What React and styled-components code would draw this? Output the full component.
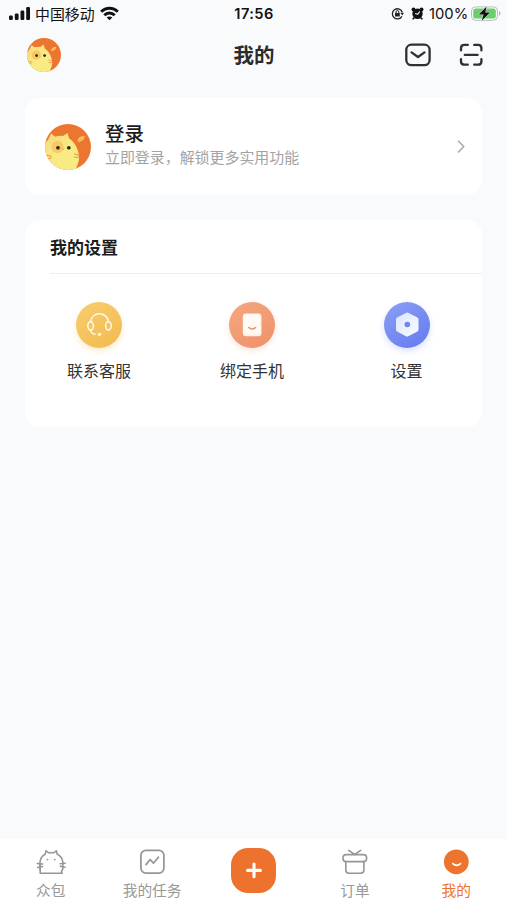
import React from 'react';
import styled, { createGlobalStyle } from 'styled-components';

const GlobalStyle = createGlobalStyle`
  * { box-sizing: border-box; }
  body {
    margin: 0;
    background: #f9fafc;
    font-family: "Noto Sans CJK SC", sans-serif;
    color: #222;
  }
  svg { display: block; flex: none; overflow: visible; }
`;

const Screen = styled.div`
  width: 100%;
  max-width: 507px;
  height: 900px;
  display: flex;
  flex-direction: column;
  overflow: hidden;
  background: #f9fafc;
`;

const StatusBar = styled.header`
  height: 27px;
  flex: none;
  display: grid;
  grid-template-columns: 1fr 44px 1fr;
  align-items: center;
  padding: 0 7px 0 9px;
  color: #111;
`;

const StatusGroup = styled.div`
  display: flex;
  align-items: center;
  justify-content: ${(p) => (p.$end ? 'flex-end' : 'flex-start')};
`;

const Carrier = styled.span`
  margin: 0 5px 0 4px;
  padding-bottom: 1px;
  font-size: 14.9px;
  line-height: 25px;
`;

const Clock = styled.time`
  margin-left: -1px;
  font: 600 14.6px/26px Inter, sans-serif;
  letter-spacing: 0.4px;
  text-align: center;
  white-space: nowrap;
`;

const Percent = styled.span`
  width: 39px;
  margin: 0 3px 0 5px;
  font: 400 14.8px/26px Inter, sans-serif;
  white-space: nowrap;
`;

const TitleBar = styled.div`
  height: 56px;
  flex: none;
  display: grid;
  grid-template-columns: 1fr auto 1fr;
  align-items: center;
  padding: 0 24px 0 27px;
`;

const Title = styled.h1`
  margin: 0;
  padding: 0 2px 2px 0;
  font-size: 20.5px;
  line-height: 30px;
  font-weight: 600;
  color: #2b2b2b;
`;

const TitleActions = styled.div`
  display: flex;
  justify-content: flex-end;
  gap: 28px;
`;

const Content = styled.main`
  flex: 1;
  display: flex;
  flex-direction: column;
  gap: 25px;
  padding: 15px 25px 0;
`;

const Card = styled.section`
  background: #fff;
  border-radius: 15px;
`;

const LoginCard = styled(Card)`
  height: 97px;
  display: flex;
  align-items: center;
  padding: 0 17px 0 20px;
`;

const LoginText = styled.div`
  flex: 1;
  margin-left: 14px;
  padding-bottom: 5px;
`;

const LoginTitle = styled.div`
  font-size: 19.4px;
  line-height: 25px;
  font-weight: 500;
  color: #1c1c1c;
`;

const LoginHint = styled.div`
  font-size: 14.95px;
  line-height: 23px;
  color: #a3a3a3;
`;

const SettingsCard = styled(Card)`
  height: 207px;
`;

const SettingsHeading = styled.h2`
  height: 54px;
  margin: 0 0 0 25px;
  border-bottom: 1px solid #eeeff0;
  font-size: 17px;
  line-height: 53px;
  font-weight: 700;
  color: #1c1c1c;
`;

const SettingsGrid = styled.div`
  display: grid;
  grid-template-columns: 148px 1fr 151px;
  padding-top: 28px;
`;

const SettingItem = styled.div`
  display: flex;
  flex-direction: column;
  align-items: center;
  gap: 9px;
  font-size: 16px;
  line-height: 26px;
  color: #333;
`;

const Disc = styled.div`
  width: 46px;
  height: 46px;
  display: grid;
  place-items: center;
  border-radius: 50%;
  background: ${(p) => p.$fill};
  box-shadow: 0 3px 6px ${(p) => p.$glow};
`;

const TabBar = styled.nav`
  height: 61px;
  flex: none;
  display: grid;
  grid-template-columns: repeat(5, 1fr);
  background: #fff;
`;

const Tab = styled.div`
  display: flex;
  flex-direction: column;
  align-items: center;
  padding-top: 9px;
  gap: 3px;
  font-size: 14.7px;
  line-height: 23px;
  white-space: nowrap;
  color: ${(p) => (p.$active ? '#ed742f' : '#999')};
`;

const AddButton = styled.div`
  width: 45px;
  height: 45px;
  display: grid;
  place-items: center;
  border-radius: 17px;
  background: #ed722e;
`;

const SignalIcon = () => (
  <svg width="22" height="14" viewBox="0 0 22 14" fill="#111">
    <rect x="0" y="8.5" width="3.8" height="4.5" rx="1.2" />
    <rect x="5.8" y="6.5" width="3.8" height="6.5" rx="1.2" />
    <rect x="11.5" y="3.5" width="3.8" height="9.5" rx="1.2" />
    <rect x="17.2" y="0" width="3.8" height="13" rx="1.2" />
  </svg>
);

const WifiIcon = () => (
  <svg width="19" height="14" viewBox="0 0 19 14" fill="none" stroke="#111" strokeWidth="2.9">
    <path d="M1.2 4.8C5.8 0 13.2 0 17.8 4.8" />
    <path d="M4.3 8.3C7.2 5.3 11.8 5.3 14.7 8.3" />
    <path d="M9.5 13.3 6.7 10.5c1.5-1.4 4.1-1.4 5.6 0Z" fill="#111" stroke="none" />
  </svg>
);

const LockIcon = () => (
  <svg width="13" height="13" viewBox="0 0 13 13" fill="none" stroke="#222">
    <path d="M10.9 9.4A5.1 5.1 0 1 1 11.3 5.2" strokeWidth="1.3" />
    <path d="M9.4 5.8h3.5l-1.6 2.7Z" fill="#222" stroke="none" />
    <rect x="4" y="6" width="4.8" height="3.5" rx="0.5" fill="#222" stroke="none" />
    <path d="M5 6.3V5a1.4 1.4 0 0 1 2.8 0v1.3" />
  </svg>
);

const AlarmSvg = styled.svg`
  margin-left: 7px;
`;

const AlarmIcon = () => (
  <AlarmSvg width="13" height="13" viewBox="0 0 13 13">
    <g fill="#111">
      <circle cx="6.5" cy="6.8" r="5.2" />
      <circle cx="2.5" cy="2.5" r="2" />
      <circle cx="10.5" cy="2.5" r="2" />
      <path d="m2.2 10.2 1.6 1-1.5 1.6-1.2-.8ZM10.8 10.2l-1.6 1 1.5 1.6 1.2-.8Z" />
    </g>
    <path d="M6.6 7.3 8.8 4.5M6.6 7.3 4.2 6.5" stroke="#fff" strokeWidth="1.1" fill="none" />
  </AlarmSvg>
);

const BatteryIcon = () => (
  <svg width="29" height="16" viewBox="0 0 29 16">
    <rect x="0.5" y="0.9" width="26" height="13.4" rx="4" fill="#f9fafc" stroke="#b9bcc0" />
    <rect x="2.2" y="2.6" width="22.6" height="10" rx="2.7" fill="#69ce6b" />
    <path d="M28 5.2c1.9.7 1.9 3.9 0 4.6Z" fill="#b5b8bb" />
    <path d="M15.6.5 7.8 8.4h4.8l-1.9 6.4 8.3-8.2h-4.7Z" fill="#111" stroke="#e6f6e6" strokeWidth="0.9" paintOrder="stroke" />
  </svg>
);

const CatAvatar = ({ size, id }) => (
  <svg width={size} height={size} viewBox="0 0 45 45">
    <defs>
      <clipPath id={id}><circle cx="22.5" cy="22.5" r="22.5" /></clipPath>
      <linearGradient id={`${id}-fur`} x1="0" y1="0" x2="1" y2="1">
        <stop stopColor="#f9d580" />
        <stop offset="0.55" stopColor="#f9eb83" />
      </linearGradient>
    </defs>
    <g clipPath={`url(#${id})`}>
      <rect width="45" height="45" fill="#ec752f" />
      <path d="M-3 46V22L3 15.5 6 9.3 10 12.4Q14 11.2 17.5 11.8L22 8.7 23.5 14C30.5 18.5 34.5 29 33 36 32.3 39.5 30.5 42 30 46Z" fill={`url(#${id}-fur)`} />
      <circle cx="12.2" cy="22.5" r="6" fill="#f8c867" />
      <path d="M31.8 17.5C32.2 13 35 11.7 38.8 12 38.5 15 36 17.5 31.8 17.5Z" fill="#f8cb63" />
      <path d="m33 16.7 4-3.1" stroke="#ec8b36" strokeWidth="0.7" />
      <g fill="#252515"><circle cx="12.7" cy="23.2" r="1.8" /><circle cx="23.3" cy="23.2" r="1.8" /></g>
      <path d="m16.8 24 1.1 1 1.1-1" fill="none" stroke="#d79b45" strokeWidth="0.7" />
      <path d="m1 30.6 5.5 1M2.5 34.3 6.3 33M28.5 29l5 1.8M28.2 32.3l5.8.5" stroke="#ed9550" strokeWidth="1" />
    </g>
  </svg>
);

const MailIcon = () => (
  <svg width="26" height="24" viewBox="0 0 26 24" fill="none" stroke="#303030" strokeWidth="2.3" strokeLinecap="round" strokeLinejoin="round">
    <rect x="1.3" y="1.7" width="23.3" height="20.5" rx="5.2" />
    <path d="m6.5 9.4 6.5 4.6 6.5-4.6" />
  </svg>
);

const ScanIcon = () => (
  <svg width="24" height="24" viewBox="0 0 24 24" fill="none" stroke="#303030" strokeWidth="2.3" strokeLinecap="round">
    <path d="M8.8 1.9H5.5Q2 1.9 2 5.2v2.2M15.2 1.9h3.9q3.3 0 3.3 3.3v2.2M2 16.2v2.2q0 3.3 3.5 3.3h3.3M22.4 16.2v2.2q0 3.3-3.3 3.3h-3.9M5.8 11.9h12.8" />
  </svg>
);

const ChevronIcon = () => (
  <svg width="8" height="14" viewBox="0 0 8 14" fill="none" stroke="#a8a8a8" strokeWidth="1.5">
    <path d="m1 .7 5.7 5.9L1 12.5" />
  </svg>
);

const HeadsetIcon = () => (
  <svg width="28" height="28" viewBox="0 0 28 28" fill="none" stroke="#fff7e2" strokeWidth="1.6" strokeLinecap="round">
    <ellipse cx="5.6" cy="14.8" rx="2.8" ry="4.2" />
    <ellipse cx="23.4" cy="14.8" rx="2.8" ry="4.2" />
    <path d="M5.6 10.6C6.8.2 22 .2 23.4 10.6M5.5 19.1q1 4 4.5 4" />
    <circle cx="14.5" cy="23.5" r="1.5" fill="#fff7e2" stroke="none" />
    <path d="M12.8 23h3.4" strokeWidth="0.9" />
  </svg>
);

const PhoneIcon = () => (
  <svg width="22" height="26" viewBox="0 0 22 26">
    <rect x="1.8" y="1.4" width="18.7" height="22.9" rx="3.3" fill="#fff0e7" />
    <rect x="2.6" y="2.1" width="16.2" height="20" rx="2.5" fill="#fffaf6" />
    <path d="M7.8 15.5q3.4 3.1 6.8 0" fill="none" stroke="#ee8d5d" strokeWidth="1.5" strokeLinecap="round" />
  </svg>
);

const HexIcon = () => (
  <svg width="24" height="26" viewBox="0 0 24 26">
    <defs>
      <linearGradient id="hex" x1="0" y1="0" x2="1" y2="1">
        <stop stopColor="#dce7ff" />
        <stop offset="1" stopColor="#f7fbff" />
      </linearGradient>
    </defs>
    <path d="M12.3 2.6 21.5 7.3V17.8L12.3 22.6 3 17.8V7.3Z" fill="url(#hex)" stroke="url(#hex)" strokeWidth="4" strokeLinejoin="round" />
    <circle cx="12.3" cy="12.5" r="2.8" fill="#6d83ed" />
  </svg>
);

const CatTabIcon = () => (
  <svg width="30" height="27" viewBox="0 0 30 27" fill="none" stroke="#969696" strokeWidth="1.55" strokeLinecap="round" strokeLinejoin="round">
    <path d="M4.2 20v5.3h22q-1.5-1.9.6-4.3V14Q26.4 8.7 21.2 6.2L20.4 2.8 17.4 4.8H12.8L9.9 2.8 9.2 6.2Q4.4 8.7 4 14V20" />
    <path d="M1.3 15.5 6.7 16M1.7 19.5l5-1M24.2 15.7l5-.4M24.2 18.3l4.7 1M4.1 17v5" />
    <circle cx="11.5" cy="11.6" r=".95" fill="#969696" stroke="none" />
    <circle cx="18.7" cy="11.6" r=".95" fill="#969696" stroke="none" />
  </svg>
);

const ChartTabIcon = () => (
  <svg width="26" height="27" viewBox="0 0 26 27" fill="none" stroke="#969696" strokeWidth="1.75" strokeLinecap="round" strokeLinejoin="round">
    <rect x="1.9" y="2.4" width="23" height="22.6" rx="5" />
    <path d="m7 16.6 4.1-5.1 3.3 3.7 5-6" />
  </svg>
);

const GiftTabIcon = () => (
  <svg width="26" height="27" viewBox="0 0 26 27" fill="none" stroke="#969696" strokeWidth="1.6" strokeLinecap="round" strokeLinejoin="round">
    <rect x="1" y="6.6" width="23.6" height="7" rx="3.2" />
    <path d="M3.8 13.5V22q0 3.2 3.2 3.2h11.7q3.2 0 3.2-3.2v-8.5M6.7 2.3l6 4.2 6-4.2" />
  </svg>
);

const SmileTabIcon = () => (
  <svg width="26" height="27" viewBox="0 0 26 27">
    <circle cx="13.3" cy="13.8" r="12.4" fill="#ed742f" />
    <path d="M9.8 15.7q3.9 3.3 7.8 0" fill="none" stroke="#fff" strokeWidth="1.6" strokeLinecap="round" />
  </svg>
);

const PlusIcon = () => (
  <svg width="17" height="17" viewBox="0 0 17 17" stroke="#fff" strokeWidth="3.1" strokeLinecap="round">
    <path d="M9 2v12.8M2.6 8.4h12.8" />
  </svg>
);

const settings = [
  { label: '联系客服', fill: 'linear-gradient(145deg, #f7cd70, #f3ba4e)', glow: '#f3ba4e45', Icon: HeadsetIcon },
  { label: '绑定手机', fill: 'linear-gradient(145deg, #f3a880, #ef916a)', glow: '#ef916a38', Icon: PhoneIcon },
  { label: '设置', fill: 'linear-gradient(145deg, #8b9ff5, #647aef)', glow: '#647aef38', Icon: HexIcon },
];

export default function App() {
  return (
    <>
      <GlobalStyle />
      <Screen>
        <StatusBar>
          <StatusGroup><SignalIcon /><Carrier>中国移动</Carrier><WifiIcon /></StatusGroup>
          <Clock>17:56</Clock>
          <StatusGroup $end><LockIcon /><AlarmIcon /><Percent>100%</Percent><BatteryIcon /></StatusGroup>
        </StatusBar>
        <TitleBar>
          <CatAvatar size={34} id="header-cat" />
          <Title>我的</Title>
          <TitleActions><MailIcon /><ScanIcon /></TitleActions>
        </TitleBar>
        <Content>
          <LoginCard>
            <CatAvatar size={46} id="login-cat" />
            <LoginText>
              <LoginTitle>登录</LoginTitle>
              <LoginHint>立即登录，解锁更多实用功能</LoginHint>
            </LoginText>
            <ChevronIcon />
          </LoginCard>
          <SettingsCard>
            <SettingsHeading>我的设置</SettingsHeading>
            <SettingsGrid>
              {settings.map(({ label, fill, glow, Icon }) => (
                <SettingItem key={label}>
                  <Disc $fill={fill} $glow={glow}><Icon /></Disc>
                  <span>{label}</span>
                </SettingItem>
              ))}
            </SettingsGrid>
          </SettingsCard>
        </Content>
        <TabBar>
          <Tab><CatTabIcon />众包</Tab>
          <Tab><ChartTabIcon />我的任务</Tab>
          <Tab><AddButton><PlusIcon /></AddButton></Tab>
          <Tab><GiftTabIcon />订单</Tab>
          <Tab $active><SmileTabIcon />我的</Tab>
        </TabBar>
      </Screen>
    </>
  );
}
